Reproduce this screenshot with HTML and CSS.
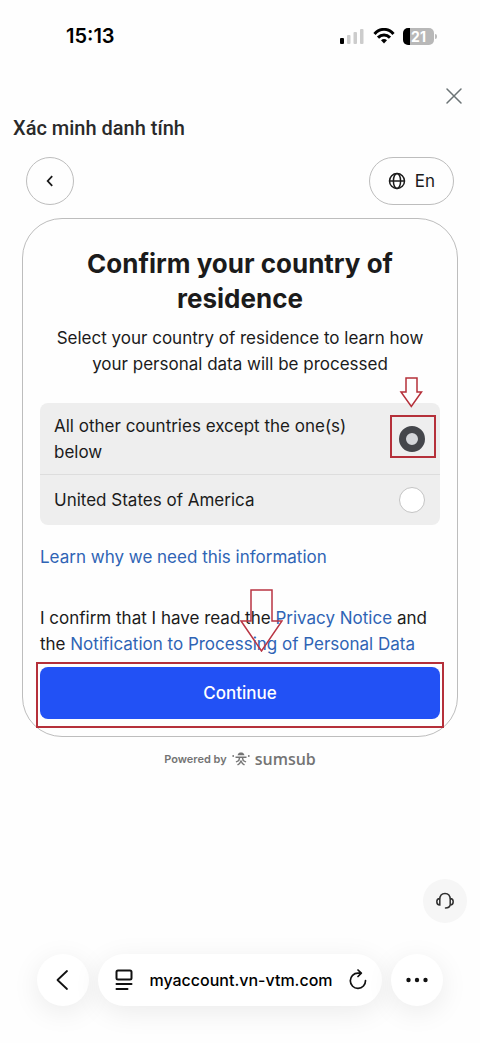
FILE: index.html
```html
<!DOCTYPE html>
<html lang="vi">
<head>
<meta charset="utf-8">
<meta name="viewport" content="width=device-width, initial-scale=1">
<title>Xác minh danh tính</title>
<link rel="stylesheet" href="styles.css">
</head>
<body>
<div class="screen">
  <div class="status">
    <time class="clock">15:13</time>
    <div class="status-icons">
      <svg width="26" height="16" viewBox="0 0 26 16"><rect x="1" y="10" width="4" height="6" rx="1" fill="#000"/><g fill="#ccc"><rect x="8" y="7" width="3.5" height="9" rx="1"/><rect x="14.500" y="4" width="3.500" height="12" rx="1"/><rect x="21" y="1" width="3.500" height="15" rx="1"/></g></svg>
      <svg width="22" height="16" viewBox="0 0 22 16" fill="none" stroke="#000" stroke-width="3"><path d="M1.500 6C7-0.200 15-0.200 20.500 6"/><path d="M5 9.600c3.500-3.600 8.500-3.600 12 0"/><path d="M11 15.500l-3-3.200c1.800-1.600 4.200-1.600 6 0z" fill="#000" stroke="none"/></svg>
      <span class="battery"><span class="battery-level">21</span></span>
    </div>
  </div>
  <header class="top">
    <button class="close" aria-label="Close"><svg width="18" height="18" viewBox="0 0 18 18" fill="none" stroke="#6b7375" stroke-width="1.500" stroke-linecap="round"><path d="M2 2l14 14M16 2L2 16"/></svg></button>
    <h1 class="title">Xác minh danh tính</h1>
  </header>
  <nav class="nav">
    <button class="pill back" aria-label="Back"><svg width="10" height="12" viewBox="0 0 10 12" fill="none" stroke="#1b1b1b" stroke-width="1.800"><path d="M7.200 1.200L2.700 6l4.500 4.800"/></svg></button>
    <button class="pill lang"><svg width="18" height="18" viewBox="0 0 18 18" fill="none" stroke="#1b1b1b" stroke-width="1.500"><circle cx="9" cy="9" r="7.500"/><ellipse cx="9" cy="9" rx="3.600" ry="7.500"/><path d="M1.500 9h15"/></svg>En</button>
  </nav>
  <main class="card">
    <h2 class="heading">Confirm your country of residence</h2>
    <p class="lead">Select your country of residence to learn how your personal data will be processed</p>
    <div class="options">
      <label class="option"><span>All other countries except the one(s) below</span>
        <span class="choice"><input class="radio" type="radio" name="country" checked>
          <span class="mark mark-radio"></span>
          <svg class="arrow-radio" width="24" height="32" viewBox="0 0 24 32" fill="none" stroke="#b5303a" stroke-width="1.500"><path d="M7 2h11v14h4.500L12.300 30.500 2 16h5z"/></svg></span></label>
      <label class="option"><span>United States of America</span><span class="choice"><input class="radio" type="radio" name="country"></span></label>
    </div>
    <a class="link learn" href="#why">Learn why we need this information</a>
    <p class="consent">I confirm that I have read the <a class="link" href="#privacy">Privacy Notice</a> and the <a class="link" href="#processing">Notification to Processing of Personal Data</a>
      <svg class="arrow-continue" width="44" height="64" viewBox="0 0 44 64" fill="none" stroke="#b93543" stroke-width="1.500"><path d="M12 2h21v31h10L22.500 63 2 33h10z"/></svg></p>
    <div class="action"><button class="continue">Continue</button><span class="mark mark-continue"></span></div>
  </main>
  <div class="powered"><span>Powered by</span>
    <svg width="18" height="14" viewBox="0 0 18 14" fill="#747474"><path d="M5.500 3.200C6.300 1 7.400.5 9 .5s2.700.5 3.500 2.700z"/><path d="M3.500 5.200h11M7.600 5.500L6.800 8.500 4 10M10.400 5.500l.8 3 2.800 1.500M5.500 13l2-1.500L9 9l1.500 2.500 2 1.500" fill="none" stroke="#747474" stroke-width="1.400"/><circle cx="1.200" cy="4" r=".9"/><circle cx="16.800" cy="4" r=".9"/></svg>
    <span class="brand">sumsub</span></div>
  <div class="bottom">
    <button class="support" aria-label="Support"><svg width="20" height="20" viewBox="0 0 20 20" fill="none" stroke="#303030" stroke-width="1.500" stroke-linecap="round"><path d="M4.800 8.500C4.800 4.600 7 2.500 10 2.500s5.200 2.100 5.200 6M4.800 7.500v6.500c-2 0-3-1.200-3-3.200s1-3.300 3-3.300M15.200 7.500v6.500c2 0 3-1.200 3-3.200s-1-3.300-3-3.300M15.200 14c-.5 2-2.200 3-4.700 3"/></svg></button>
    <div class="browser">
      <button class="round" aria-label="Previous page"><svg width="14" height="22" viewBox="0 0 14 22" fill="none" stroke="#111" stroke-width="1.800" stroke-linecap="round" stroke-linejoin="round"><path d="M11 2L1.500 11l9.500 9"/></svg></button>
      <div class="address">
        <svg width="18" height="22" viewBox="0 0 18 22" fill="none" stroke="#111" stroke-width="2" stroke-linecap="round"><rect x="1.500" y="1.500" width="15" height="9" rx="1.500"/><path d="M1.500 15h15M1.500 20h11"/></svg>
        <span class="url">myaccount.vn-vtm.com</span>
        <button class="reload" aria-label="Reload"><svg width="18" height="22" viewBox="0 0 18 22" fill="none" stroke="#111" stroke-width="1.700" stroke-linecap="round" stroke-linejoin="round"><path d="M16.500 11.500A7.600 7.600 0 1 1 9 4.200h3M9 1l3.300 3.200L9 7.500"/></svg></button>
      </div>
      <button class="round" aria-label="More"><svg width="22" height="6" viewBox="0 0 22 6" fill="#111"><circle cx="2.500" cy="3" r="2.200"/><circle cx="11" cy="3" r="2.200"/><circle cx="19.500" cy="3" r="2.200"/></svg></button>
    </div>
  </div>
</div>
</body>
</html>
```
FILE: styles.css
```css
* { box-sizing: border-box; }
body { margin: 0; background: #fefefe; color: #1b1b1b; font-family: Inter, "Liberation Sans", sans-serif; }
button { padding: 0; border: 0; background: none; color: inherit; font: inherit; cursor: pointer; }
svg { display: block; flex: none; }
h1, h2, p { margin: 0; }

.screen { display: flex; flex-direction: column; min-height: 100vh; }

.status { display: flex; align-items: center; justify-content: space-between; height: 72px; padding: 0 46px 0 66px; }
.clock { color: #000; font-size: 20px; font-weight: 600; }
.status-icons { display: flex; align-items: center; gap: 8px; }
.battery { position: relative; width: 31px; height: 17px; border-radius: 5px; background: linear-gradient(to right, #000 7px, #b8b8b8 7px); }
.battery::after { content: ""; position: absolute; right: -3px; top: 6px; width: 2px; height: 5px; border-radius: 0 2px 2px 0; background: #bbb; }
.battery-level { display: block; color: #fff; font-size: 14px; font-weight: 700; line-height: 17px; text-align: center; }

.top { display: flex; flex-direction: column; padding: 12px 13px 0; }
.close { display: flex; align-items: center; justify-content: center; align-self: flex-end; width: 26px; height: 24px; }
.title { margin-top: 8px; color: #2a2a2a; font-family: Roboto, sans-serif; font-size: 20px; font-weight: 500; line-height: 24px; }

.nav { display: flex; justify-content: space-between; padding: 17px 26px 13px; }
.pill { display: flex; align-items: center; justify-content: center; gap: 9px; height: 48px; border: 1px solid #bdbdbd; border-radius: 24px; font-size: 17px; }
.back { width: 48px; }
.lang { width: 85px; }

.card { display: flex; flex-direction: column; margin: 0 22px; padding: 27px 17px 17px; border: 1px solid #bdbdbd; border-radius: 40px; font-size: 17px; line-height: 26px; }
.heading { font-size: 26px; font-weight: 700; line-height: 35px; text-align: center; }
.lead { margin-top: 9px; text-align: center; }

.options { margin-top: 26px; border-radius: 8px; background: #eee; }
.option { display: flex; align-items: center; justify-content: space-between; gap: 24px; padding: 10px 15px 9px 14px; }
.option + .option { padding-top: 12px; padding-bottom: 12px; border-top: 1px solid #ddd; }
.choice { position: relative; flex: none; }
.radio { display: block; appearance: none; width: 26px; height: 26px; margin: 0; border: 1px solid #c4c4c4; border-radius: 50%; background: #fff; }
.radio:checked { border: 7px solid #44464b; background: #d4d6da; }

.mark { position: absolute; border: 2px solid #b5303a; pointer-events: none; }
.mark-radio { inset: -11px -11px -6px -9px; }
.arrow-radio { position: absolute; left: 0; top: -50px; }
.mark-continue { inset: -5px -4px -9px; }
.arrow-continue { position: absolute; left: 199px; top: -17px; }

.link { color: #2f64b5; text-decoration: none; }
.learn { align-self: flex-start; margin-top: 19px; }
.consent { position: relative; margin-top: 35px; }
.action { position: relative; margin-top: 10px; }
.continue { display: block; width: 100%; height: 52px; border-radius: 8px; background: #2251f5; color: #fff; font-weight: 500; }

.powered { display: flex; align-items: center; justify-content: center; gap: 5px; height: 24px; margin-top: 10px; color: #747474; font-size: 11px; font-weight: 600; }
.brand { font-family: "Open Sans", sans-serif; font-size: 16px; font-weight: 600; line-height: 16px; }

.bottom { display: flex; flex-direction: column; margin-top: auto; padding: 0 13px 37px; }
.support { display: flex; align-items: center; justify-content: center; align-self: flex-end; width: 44px; height: 44px; border-radius: 50%; background: #f6f6f6; }
.browser { display: flex; gap: 9px; margin-top: 31px; padding: 0 24px; }
.round, .address { display: flex; align-items: center; justify-content: center; height: 52px; border-radius: 26px; background: #fff; box-shadow: 0 6px 28px rgba(0, 0, 0, 0.08); }
.round { flex: none; width: 52px; }
.address { flex: 1; justify-content: space-between; padding: 0 15px 0 17px; }
.url { color: #000; font-size: 16px; font-weight: 500; }
```
